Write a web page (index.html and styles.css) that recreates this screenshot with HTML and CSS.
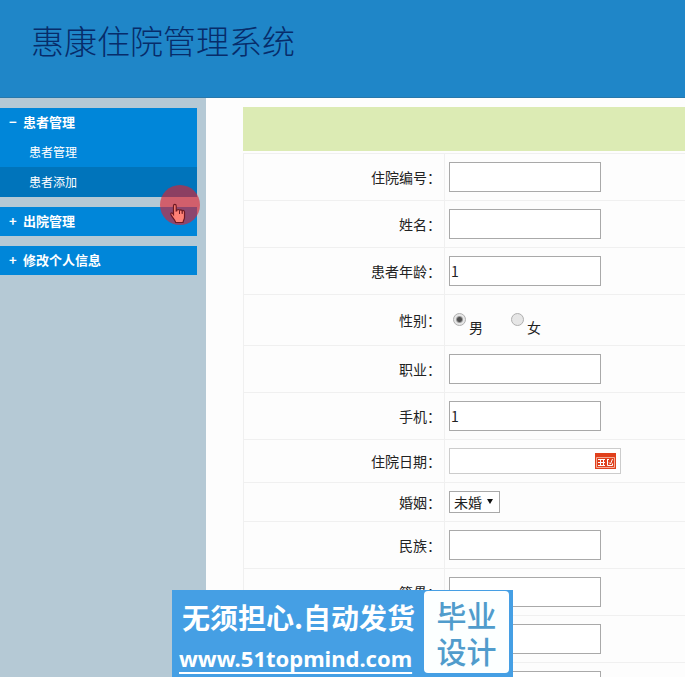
FILE: index.html
```html
<!DOCTYPE html>
<html lang="zh-CN">
<head>
  <meta charset="UTF-8">
  <meta name="viewport" content="width=device-width, initial-scale=1.0">
  <title>惠康住院管理系统</title>
  <link rel="stylesheet" href="styles.css">
</head>
<body>
  <header class="header">
    <h1>惠康住院管理系统</h1>
  </header>

  <div class="layout">
    <!-- Left menu -->
    <nav class="sidebar">
      <div class="menu-group">
        <button type="button" class="menu-title"><span class="sign">−</span>患者管理</button>
        <a href="#" class="menu-item">患者管理</a>
        <a href="#" class="menu-item active">患者添加</a>
      </div>
      <div class="menu-group">
        <button type="button" class="menu-title"><span class="sign">+</span>出院管理</button>
      </div>
      <div class="menu-group">
        <button type="button" class="menu-title"><span class="sign">+</span>修改个人信息</button>
      </div>
    </nav>

    <!-- Patient form -->
    <main class="content">
      <form>
        <div class="form-head"></div>
        <table class="form-table">
          <tr>
            <th><label for="number">住院编号：</label></th>
            <td><input type="text" class="text" id="number"></td>
          </tr>
          <tr>
            <th><label for="name">姓名：</label></th>
            <td><input type="text" class="text" id="name"></td>
          </tr>
          <tr>
            <th><label for="age">患者年龄：</label></th>
            <td><input type="text" class="text" id="age" value="1"></td>
          </tr>
          <tr>
            <th>性别：</th>
            <td>
              <div class="radios">
                <label><input type="radio" name="sex" checked><span>男</span></label>
                <label><input type="radio" name="sex"><span>女</span></label>
              </div>
            </td>
          </tr>
          <tr>
            <th><label for="job">职业：</label></th>
            <td><input type="text" class="text" id="job"></td>
          </tr>
          <tr>
            <th><label for="phone">手机：</label></th>
            <td><input type="text" class="text" id="phone" value="1"></td>
          </tr>
          <tr>
            <th><label for="date">住院日期：</label></th>
            <td>
              <div class="date-box">
                <input type="text" id="date">
                <button type="button" aria-label="选择日期">
                  <svg width="21" height="16" viewBox="0 0 21 16">
                    <rect width="21" height="16" fill="#e0401c"/>
                    <path d="M1.500 4.500h18v10h-18z" fill="none" stroke="#f4ac96"/>
                    <path d="M3 6.500h7M3 9.500h7M3 12.500h7M5.500 6v7M8.500 6v7" stroke="#fff" fill="none"/>
                    <path d="M12.500 6v6.500h5v-2M12 6.500h2M14 9.500l1.500 1.500 2-5" stroke="#fff" fill="none"/>
                  </svg>
                </button>
              </div>
            </td>
          </tr>
          <tr>
            <th><label for="marriage">婚姻：</label></th>
            <td>
              <div class="select-box">
                <select id="marriage">
                  <option>未婚</option>
                  <option>已婚</option>
                </select>
              </div>
            </td>
          </tr>
          <tr>
            <th><label for="nation">民族：</label></th>
            <td><input type="text" class="text" id="nation"></td>
          </tr>
          <tr>
            <th><label for="origin">籍贯：</label></th>
            <td><input type="text" class="text" id="origin"></td>
          </tr>
          <tr>
            <th></th>
            <td><input type="text" class="text" aria-label="地址"></td>
          </tr>
          <tr>
            <th></th>
            <td><input type="text" class="text" aria-label="备注"></td>
          </tr>
        </table>
      </form>
    </main>
  </div>

  <!-- Floating banner -->
  <aside class="banner">
    <div class="banner-text">
      <div class="slogan">无须担心.自动发货</div>
      <a href="#">www.51topmind.com</a>
    </div>
    <div class="banner-badge">毕业<br>设计</div>
  </aside>

  <!-- Click marker with hand cursor -->
  <div class="pointer">
    <svg width="40" height="40" viewBox="0 0 40 40">
      <circle cx="20" cy="20" r="20" fill="#e21f2b" fill-opacity="0.62"/>
      <path d="M14.500 30.500v-8.500c0-2.200 2.700-2.200 2.700 0v5l.6-.2c.2-1.800 2.500-1.600 2.700 0 .4-1.500 2.400-1.200 2.700.4.500-1.200 2.300-.8 2.300.8v5.200c0 2.200-1.200 3-1.500 5.300h-7.300c-.6-2.800-3.200-4.600-4.700-7.800-.8-2 1-2.500 2.500-.2z" fill="#ff8176" stroke="#6d1822" stroke-width="1.200" transform="translate(-1 -1)"/>
      <path d="M19.500 26v3M22.200 26.500v2.500" stroke="#6d1822"/>
    </svg>
  </div>
</body>
</html>
```

FILE: styles.css
```css
* {
  box-sizing: border-box;
}
body {
  margin: 0;
  height: 100vh;
  display: flex;
  flex-direction: column;
  overflow: hidden;
  font-family: "Noto Sans CJK SC", sans-serif;
  font-size: 14px;
  color: #222;
  background-color: #fdfdfd;
}
input, select, button {
  font: inherit;
  color: inherit;
}
.header {
  flex: none;
  padding: 16px 31px 32px;
  background-color: #1f86c8;
  border-bottom: 1px solid #2878ab;
}
.header h1 {
  margin: 0;
  font-size: 33px;
  font-weight: 300;
  line-height: 49px;
  color: #072c6a;
}
.layout {
  flex: 1;
  display: flex;
  min-height: 0;
}

/* Left menu */
.sidebar {
  flex: none;
  width: 206px;
  padding: 10px 9px 0 0;
  background-color: #b5c9d5;
}
.menu-group {
  margin-bottom: 10px;
  background-color: #0086d9;
}
.menu-title {
  display: flex;
  align-items: center;
  width: 100%;
  height: 29px;
  padding: 0 9px 2px;
  border: 0;
  background: none;
  color: #fff;
  font-size: 13px;
  font-weight: bold;
}
.sign {
  width: 14px;
  text-align: left;
}
.menu-item {
  display: block;
  padding-left: 29px;
  line-height: 30px;
  font-size: 12px;
  color: #fff;
  text-decoration: none;
}
.menu-item.active {
  background-color: #0074bb;
}

/* Form */
.content {
  flex: 1;
  min-width: 0;
  padding: 9px 0 0 37px;
  overflow: hidden;
}
.form-head {
  height: 44px;
  background-color: #dcebb4;
}
.form-table {
  width: 100%;
  margin-top: 2px;
  border-collapse: collapse;
}
.form-table th,
.form-table td {
  padding: 8px 4px;
  border: 1px solid #f0f0f0;
  line-height: 20px;
}
.form-table td {
  border-right: 0;
}
.form-table th {
  width: 201px;
  padding-right: 3px;
  text-align: right;
  font-weight: normal;
}
.text {
  display: block;
  width: 152px;
  height: 30px;
  padding: 0 1px;
  border: 1px solid #a9a9a9;
  background-color: #fff;
}
.radios {
  display: flex;
  gap: 24px;
}
.radios label {
  display: flex;
  align-items: flex-start;
  gap: 3px;
}
.radios input {
  appearance: none;
  width: 13px;
  height: 13px;
  margin: 10px 0 0 4px;
  border: 1px solid #b0b0b0;
  border-radius: 50%;
  background-color: #e6e6e6;
}
.radios input:checked {
  background: radial-gradient(circle, #505050 2px, #e6e6e6 4px);
}
.radios span {
  padding-top: 14px;
}
.date-box {
  display: flex;
  align-items: center;
  width: 172px;
  height: 26px;
  padding-right: 4px;
  border: 1px solid #ccc;
  background-color: #fff;
}
.date-box input {
  flex: 1;
  min-width: 0;
  border: 0;
  background: none;
}
.date-box button {
  display: flex;
  padding: 0;
  border: 0;
  background: none;
}
.select-box {
  position: relative;
  width: 51px;
  height: 22px;
}
.select-box select {
  appearance: none;
  display: block;
  width: 100%;
  height: 22px;
  padding: 0 4px;
  border: 1px solid #a9a9a9;
  border-radius: 0;
  background-color: #fff;
  line-height: 20px;
}
.select-box:after {
  content: "";
  position: absolute;
  top: 8px;
  right: 7px;
  border: 3px solid transparent;
  border-top: 5px solid #111;
  border-bottom: 0;
  pointer-events: none;
}

/* Floating banner */
.banner {
  position: fixed;
  left: 172px;
  bottom: 0;
  display: flex;
  height: 87px;
  padding: 1px 4px 4px 7px;
  background-color: #459fe4;
  color: #fff;
}
.banner-text {
  width: 245px;
}
.slogan {
  padding-left: 3px;
  font-size: 28px;
  font-weight: bold;
  line-height: 52px;
  white-space: nowrap;
}
.banner-text a {
  display: block;
  font-family: "Noto Sans", sans-serif;
  font-size: 22px;
  font-weight: bold;
  line-height: 30px;
  color: #fff;
  text-decoration-thickness: 2px;
  text-decoration-skip-ink: none;
  text-underline-offset: 5px;
}
.banner-badge {
  width: 85px;
  padding-top: 5px;
  border-radius: 4px;
  background-color: #fcffff;
  color: #509ccc;
  font-size: 30px;
  font-weight: 500;
  line-height: 36px;
  text-align: center;
}

/* Click marker */
.pointer {
  position: absolute;
  left: 160px;
  top: 185px;
  pointer-events: none;
}
.pointer svg {
  display: block;
}
```
